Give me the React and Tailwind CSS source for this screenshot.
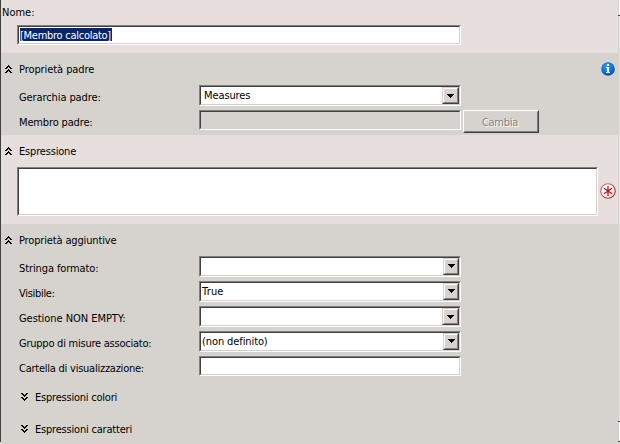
const SUNKEN = 'border border-t-[#808080] border-l-[#808080] border-b-white border-r-white';
const INNER = 'border border-t-[#404040] border-l-[#404040] border-b-[#d4d0c8] border-r-[#d4d0c8]';

function Chevrons({ down = false }) {
  return (
    <svg width="7" height="8" viewBox="0 0 7 8" shapeRendering="crispEdges" className={down ? 'shrink-0 -scale-y-100' : 'shrink-0'}>
      <path d="M3 0h1v1h-1z M2 1h3v1h-3z M1 2h2v1h-2z M4 2h2v1h-2z M0 3h2v1h-2z M5 3h2v1h-2z M3 4h1v1h-1z M2 5h3v1h-3z M1 6h2v1h-2z M4 6h2v1h-2z M0 7h2v1h-2z M5 7h2v1h-2z" fill="#000" />
    </svg>
  );
}

function Field({ className = '', bg = 'bg-white', children }) {
  return (
    <div className={`shrink-0 ${SUNKEN} ${className}`}>
      <div className={`flex h-full ${INNER} ${bg}`}>{children}</div>
    </div>
  );
}

function Combo({ value, tracking = '', pad = 'pl-px', warm = false, low = false }) {
  return (
    <Field className="h-[21px] w-[262px]">
      <div className={`flex-1 pt-px leading-[15px] ${pad} ${tracking}`}>{value}</div>
      <div className={`h-[17px] shrink-0 border border-t-[#d4d0c8] border-l-[#d4d0c8] border-b-[#404040] border-r-[#404040] ${warm ? 'w-[17px]' : 'w-4'}`}>
        <div className={`flex h-full justify-center border border-t-white border-l-white border-b-[#808080] border-r-[#808080] ${low ? 'pt-[5px]' : 'pt-1'} ${warm ? 'bg-[#dcd3d0]' : 'bg-[#d6d3ce]'}`}>
          <svg width="7" height="4" viewBox="0 0 7 4" shapeRendering="crispEdges">
            <path d="M0 0h7v1h-7z M1 1h5v1h-5z M2 2h3v1h-3z M3 3h1v1h-1z" fill="#000" />
          </svg>
        </div>
      </div>
    </Field>
  );
}

function Row({ label, tracking = '', className = 'h-[25px]', children }) {
  return (
    <div className={`flex items-start pl-[18px] ${className}`}>
      <div className={`w-[180px] shrink-0 pt-[6px] leading-[14px] ${tracking}`}>{label}</div>
      {children}
    </div>
  );
}

function Heading({ children, tracking = '', down = false }) {
  return (
    <div className="flex h-[14px] items-center gap-[7px]">
      <Chevrons down={down} />
      <span className={`pt-0.5 ${tracking}`}>{children}</span>
    </div>
  );
}

function InfoIcon() {
  return (
    <svg width="14" height="14" viewBox="0 0 14 14">
      <defs>
        <radialGradient id="info" cx="42%" cy="35%" r="65%">
          <stop offset="0" stopColor="#3aa0f5" />
          <stop offset="0.6" stopColor="#0b74df" />
          <stop offset="1" stopColor="#0a4fa8" />
        </radialGradient>
      </defs>
      <circle cx="7" cy="7" r="6.8" fill="url(#info)" />
      <path d="M6 2h2v2H6z M5 5h3v5h1v1H5v-1h1V6H5z" fill="#fff" />
    </svg>
  );
}

function RequiredIcon() {
  return (
    <svg width="16" height="16" viewBox="0 0 16 16" className="mb-px">
      <defs>
        <linearGradient id="ring" x1="0" y1="0" x2="1" y2="1">
          <stop offset="0" stopColor="#e56d72" />
          <stop offset="1" stopColor="#8b3030" />
        </linearGradient>
        <linearGradient id="disc" x1="0" y1="0" x2="1" y2="1">
          <stop offset="0.4" stopColor="#fff" />
          <stop offset="1" stopColor="#d4cccc" />
        </linearGradient>
      </defs>
      <circle cx="8" cy="8" r="7.3" fill="url(#disc)" stroke="url(#ring)" strokeWidth="1.1" />
      <path d="M8 3v10M4 5.3l8 5.4M12 5.3l-8 5.4" stroke="#b8141c" strokeWidth="1.3" />
    </svg>
  );
}

export default function App() {
  return (
    <div className="flex h-[444px] w-[620px] flex-col overflow-hidden whitespace-nowrap bg-[#d6d3ce] text-[11px] leading-[14px] text-black [font-family:'DejaVu_Sans_Condensed','DejaVu_Sans',sans-serif] [font-stretch:condensed]">
      <div className="flex h-[442px]">
        <div className="w-px shrink-0 bg-[#404040]" />
        <div className="w-[617px] shrink-0">
          <section className="h-[53px] bg-[#e7dfde] pt-[6px]">
            <div className="pl-px">Nome:</div>
            <Field className="mt-[5px] ml-4 h-5 w-[444px]">
              <div className="ml-px mt-px h-[13px] w-[92px] bg-[#0a246a] leading-[15px] tracking-[-0.27px] text-white">[Membro calcolato]</div>
            </Field>
          </section>

          <section className="h-[82px] pt-[9px]">
            <div className="flex h-[14px] justify-between pr-[3px] pl-1">
              <Heading tracking="tracking-[-0.08px]">Proprietà padre</Heading>
              <InfoIcon />
            </div>
            <div className="pt-[9px]">
              <Row label="Gerarchia padre:" tracking="tracking-[-0.1px]">
                <Combo value="Measures" pad="pl-[3px]" tracking="tracking-[-0.1px]" warm low />
              </Row>
              <Row label="Membro padre:" tracking="tracking-[-0.15px]">
                <Field className="h-5 w-[262px]" bg="bg-[#d6d3ce]" />
                <button className="ml-[2px] h-[23px] w-[76px] border border-t-white border-l-white border-b-[#404040] border-r-[#404040]">
                  <span className="flex h-full items-center justify-center border border-t-[#d6d3ce] border-l-[#d6d3ce] border-b-[#808080] border-r-[#808080] pt-0.5 pr-[2px] tracking-[-0.25px] text-[#848284] [text-shadow:1px_1px_0_#fff]">Cambia</span>
                </button>
              </Row>
            </div>
          </section>

          <section className="h-[89px] bg-[#e7dfde] pt-[9px]">
            <div className="pl-1">
              <Heading tracking="tracking-[-0.18px]">Espressione</Heading>
            </div>
            <div className="mt-[9px] flex items-center gap-[2px] pl-4">
              <Field className="h-[49px] w-[581px]" />
              <RequiredIcon />
            </div>
          </section>

          <section className="pt-[9px]">
            <div className="pl-1">
              <Heading tracking="tracking-[-0.15px]">Proprietà aggiuntive</Heading>
            </div>
            <div className="pt-[9px]">
              <Row label="Stringa formato:" tracking="tracking-[-0.1px]"><Combo value="" /></Row>
              <Row label="Visibile:" tracking="tracking-[-0.3px]"><Combo value="True" tracking="tracking-[0.2px]" /></Row>
              <Row label="Gestione NON EMPTY:" tracking="tracking-[-0.05px]"><Combo value="" warm low /></Row>
              <Row label="Gruppo di misure associato:" tracking="tracking-[-0.24px]"><Combo value="(non definito)" tracking="tracking-[-0.1px]" /></Row>
              <Row label="Cartella di visualizzazione:" tracking="tracking-[-0.24px]"><Field className="h-5 w-[262px]" /></Row>
            </div>
            <div className="flex flex-col gap-[18px] pt-[9px] pl-5">
              <Heading down tracking="tracking-[-0.22px]">Espressioni colori</Heading>
              <Heading down tracking="tracking-[-0.2px]">Espressioni caratteri</Heading>
            </div>
          </section>
        </div>
        <div className="flex w-[2px] flex-col">
          <div className="ml-px h-[15px] bg-white" />
          <div className="h-px bg-[#404040]" />
          <div className="ml-px h-[405px] bg-[#e3e0dc]" />
          <div className="h-px bg-[#404040]" />
          <div className="ml-px h-[19px] bg-white" />
          <div className="h-px bg-[#404040]" />
        </div>
      </div>
    </div>
  );
}
